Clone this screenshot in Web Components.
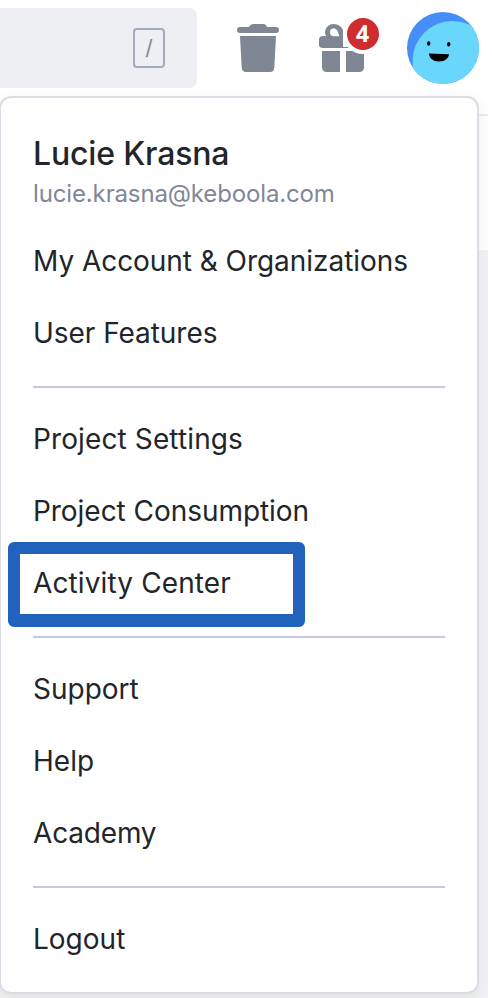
<!DOCTYPE html>
<html lang="en">
<head>
<meta charset="utf-8">
<title>Account menu</title>
<style>
html,body{margin:0;height:998px;overflow:hidden;background:#fff}
body{font-family:Inter,"Liberation Sans",sans-serif;color:#222529}
.tight{letter-spacing:-.045px}
.loose{letter-spacing:.12px}
</style>
</head>
<body>
<account-page>
  <top-bar slot="bar">
    <search-box>/</search-box>
    <trash-icon></trash-icon>
    <gift-icon>4</gift-icon>
    <user-avatar></user-avatar>
  </top-bar>
  <user-menu>
    <user-card><span slot="name">Lucie Krasna</span><span slot="mail">lucie.krasna@keboola.com</span></user-card>
    <menu-item class="tight">My Account &amp; Organizations</menu-item>
    <menu-item class="tight">User Features</menu-item>
    <menu-divider></menu-divider>
    <menu-item class="loose">Project Settings</menu-item>
    <menu-item class="tight">Project Consumption</menu-item>
    <menu-item class="loose" marked>Activity Center</menu-item>
    <menu-divider></menu-divider>
    <menu-item>Support</menu-item>
    <menu-item>Help</menu-item>
    <menu-item style="letter-spacing:-.18px">Academy</menu-item>
    <menu-divider></menu-divider>
    <menu-item>Logout</menu-item>
  </user-menu>
</account-page>
<script>
const define=(name,html)=>customElements.define(name,class extends HTMLElement{
  constructor(){super();this.attachShadow({mode:'open'}).innerHTML=html;}
});
define('account-page',`<style>
:host{display:block;position:relative;width:488px;height:998px;overflow:hidden}
.back{position:absolute;inset:0;display:flex;flex-direction:column}
.head{height:114px}
.panel{height:134px;border-top:2px solid #edeef3;background:#fff}
.rest{flex:1;background:linear-gradient(90deg,#f0f0f0 479px,#f1f2f7 479px)}
.main{position:relative}
</style><div class="back"><div class="head"></div><div class="panel"></div><div class="rest"></div></div>
<div class="main"><slot name="bar"></slot><slot></slot></div>`);
define('top-bar',`<style>:host{display:flex;align-items:flex-start;height:96px}</style><slot></slot>`);
define('search-box',`<style>
:host{display:flex;box-sizing:border-box;width:197px;height:80px;margin-top:8px;padding:20px 32px 0 0;justify-content:flex-end;background:#edeff3;border-radius:0 8px 8px 0}
kbd{box-sizing:border-box;width:32px;height:40px;border:2px solid #a2abbb;border-radius:4px;font:400 21px/36px Inter,sans-serif;text-align:center;color:#7f8794}
</style><kbd><slot></slot></kbd>`);
define('trash-icon',`<style>:host{display:block;margin:24px 0 0 40px}svg{display:block}</style>
<svg width="42" height="48" viewBox="0 0 42 48" fill="#7f8694"><path d="M3 3H12Q13.5 0 16.5 0H26Q29 0 30 3H39A3 3 0 0 1 39 9H3A3 3 0 0 1 3 3Z"/><path d="M3 12H39L37.3 43.5Q37 48 32.8 48H9.2Q5 48 4.7 43.5Z"/></svg>`);
define('gift-icon',`<style>:host{display:block;position:relative;margin:17px 0 0 40px;width:61px;height:56px}svg{display:block}
b{position:absolute;left:28px;top:1px;width:32px;height:32px;border-radius:50%;background:#cf2c30;color:#fff;font:700 23px/31px "Open Sans",sans-serif;text-align:center;text-indent:-1px}</style>
<svg width="61" height="56" viewBox="0 0 61 56" fill="#7f8694"><path fill-rule="evenodd" d="M0 23Q0 19 4 19H7Q6 17 6 15A8.5 8.5 0 0 1 14.5 7Q19 7 22 10L24 13V30H46V31H4Q0 31 0 28ZM14.3 11.3A4 4 0 0 0 14.3 19.2H20.3C19.4 15.2 18 11.3 14.3 11.3Z"/><path d="M3 34H21V55H8Q3 55 3 50ZM27 34H45V50Q45 55 40 55H27Z"/><circle cx="44" cy="17" r="20" fill="#fff"/></svg><b><slot></slot></b>`);
define('user-avatar',`<style>:host{display:block;margin:12px 0 0 27px}svg{display:block}</style>
<svg width="72" height="72" viewBox="0 0 72 72"><defs><clipPath id="c"><circle cx="36" cy="36" r="36"/></clipPath></defs><g clip-path="url(#c)"><path fill="#458ef7" d="M0 0H72V72H0Z"/><circle cx="45.5" cy="49" r="40" fill="#69d6fb"/></g><ellipse cx="21.7" cy="31.5" rx="1.7" ry="2.3"/><ellipse cx="41.7" cy="32.3" rx="1.7" ry="2.3"/><path d="M22 41.5 42 42.3C41.5 47 37 49.6 32 49.5 26.5 49.4 22 46.5 22 41.5Z"/></svg>`);
define('user-menu',`<style>:host{display:block;box-sizing:border-box;width:480px;height:898px;margin-left:-1px;padding:34px 32px 15px;border:2px solid #dadde6;border-radius:12px;background:#fff;box-shadow:0 4px 16px rgba(35,40,60,.07)}</style><slot></slot>`);
define('user-card',`<style>:host{display:block;height:93px}
.n{font-size:32px;line-height:44px;font-weight:500;letter-spacing:-.16px}.m{font-size:24px;line-height:36px;color:#7f8797;letter-spacing:-.14px}</style>
<div class="n"><slot name="name"></slot></div><div class="m"><slot name="mail"></slot></div>`);
define('menu-item',`<style>:host{display:block;position:relative;height:72px;font-size:28px;line-height:72px;white-space:nowrap}
.ring{display:none}
:host([marked]) .ring{display:block;position:absolute;box-sizing:border-box;left:-25px;top:-5px;width:297px;height:85px;border:12px solid #2162bd;border-bottom-width:13px;border-radius:6px}
</style><slot></slot><span class="ring"></span>`);
define('menu-divider',`<style>:host{display:block;height:2px;margin:17px 0 15px;background:#c5cad8}</style>`);
</script>
</body>
</html>
